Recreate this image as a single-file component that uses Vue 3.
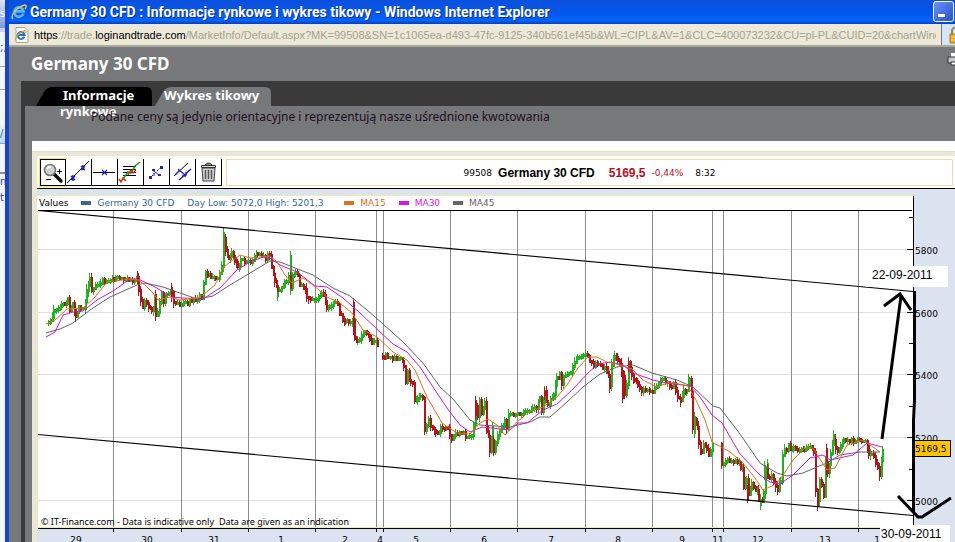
<script setup>
const url = {
  scheme: 'https',
  sub: '://trade.',
  host: 'loginandtrade.com',
  rest: '/MarketInfo/Default.aspx?MK=99508&SN=1c1065ea-d493-47fc-9125-340b561ef45b&WL=CIPL&AV=1&CLC=400073232&CU=pl-PL&CUID=20&chartWindow=1'
}

const verticals = [113, 181, 248, 315, 376, 383, 450, 517, 585, 652, 712, 723, 791, 858]
const levels = [
  { y: 249, label: '5800' },
  { y: 312, label: '5600' },
  { y: 374, label: '5400' },
  { y: 437, label: '5200' },
  { y: 500, label: '5000' }
]
const minorTicks = [217, 280, 343, 406, 469]
const days = [
  [76, '29'], [147, '30'], [214, '31'], [281, '1'], [345, '2'], [380, '4'], [416, '5'],
  [484, '6'], [551, '7'], [618, '8'], [682, '9'], [718, '11'], [758, '12'], [825, '13'], [877, '1']
]

// Price turning points, one array per uninterrupted session.
const sessions = [
  [46,321,50,320,53,308,58,307,61,303,66,303,67,298,69,308,72,303,75,314,78,307,83,307,86,292,89,278,91,288,95,284,102,280,108,279,117,277,123,277,130,279,134,280,137,277,138,288,142,308,144,300,148,307,151,310,154,300,155,315,159,303,161,291,163,299,168,292,171,290,173,302,181,303,187,301,193,298,201,295,203,280,205,273,208,272,212,277,217,277,221,263,223,235,225,249,228,257,231,251,234,258,237,267,240,259,250,260,254,255,259,252,265,257,269,253,271,268,274,280,277,291,281,287,286,280,288,273,290,288,292,272,295,272,299,282,303,285,308,298,316,297,323,293,326,307,331,303,337,302,342,322,345,317,348,322,352,317,354,337,357,340,361,332,366,331,371,340,374,339,377,345],
  [380,355,382,357,385,353,388,357,400,356,403,365,405,378,407,372,410,383,412,382,414,400,417,395,422,396,424,427,428,418,430,427,437,433,442,426,447,427,451,437,457,432,463,432,466,437,471,435,473,423,475,408,477,418,479,402,481,410,484,403,486,427,489,448,491,437,493,450,495,440,499,432,501,427,504,420,506,428,508,415,517,413,525,410,536,406,539,393,541,412,544,393,547,405,550,398,553,395,556,378,559,373,561,382,563,374,570,371,574,362,577,355,583,353,587,356,593,363,600,364,606,370,609,383,611,362,614,355,617,360,619,362,622,373,624,393,626,383,628,363,631,373,634,380,637,383,641,391,645,388,652,390,654,385,658,383,660,377,667,382,671,387,673,382,677,395,680,400,683,390,686,390,689,380,691,390,692,427,694,418,697,427,698,445,701,450,703,443,708,452,712,445],
  [720,443,721,462,727,459,737,461,742,467,743,487,746,480,748,495,751,485,755,487,760,502,763,492,765,467,767,478,771,474,777,488,780,477,782,452,788,445,795,448,810,447,813,452,815,487,817,498,819,477,823,492,825,460,827,473,830,450,833,437,837,452,840,442,843,437,853,439,865,439,868,450,873,457,877,465,879,473,882,448]
]

const spikes = [
  [89,275,286,1],[137,271,284,0],[155,290,321,0],[171,283,302,0],[223,228,246,1],[290,251,295,1],[277,283,301,1],
  [353,298,335,0],[424,400,434,0],[475,396,420,0],[484,398,408,1],[489,440,453,0],[492,422,453,1],[544,387,400,0],
  [609,372,393,0],[614,351,365,1],[622,370,403,0],[628,359,372,0],[680,395,407,0],[688,374,388,1],[694,412,438,1],
  [700,440,455,0],[721,443,469,0],[747,485,503,0],[760,495,510,1],[764,461,480,1],[767,459,478,1],[817,490,511,0],
  [826,444,475,0],[833,430,450,1],[879,463,478,0],[882,447,463,1]
]

let seed = 11
const rand = () => {
  seed = (seed * 1103515245 + 12345) % 2147483648
  return seed / 2147483648
}

let up = ''
let down = ''
for (const p of sessions) {
  let prev = p[1]
  for (let i = 2; i < p.length; i += 2) {
    const x0 = p[i - 2]
    const y0 = p[i - 1]
    const dx = p[i] - x0
    const dy = p[i + 1] - y0
    const n = Math.max(1, Math.round(dx / 2))
    for (let k = 1; k <= n; k++) {
      const x = Math.round(x0 + (dx * k) / n)
      const steep = Math.min(3, Math.abs(dy) / 4)
      const y = Math.round(y0 + (dy * k) / n + (rand() - 0.5) * (3 + steep))
      const top = Math.min(prev, y) - Math.round(rand() * (2 + steep))
      const low = Math.max(prev, y) + 2 + Math.round(rand() * (3 + steep))
      const seg = `M${x} ${Math.min(prev, y)}h2V${Math.max(prev, y) + 3}h-2zM${x} ${top}h1V${low}h-1z`
      if (y <= prev) up += seg
      else down += seg
      prev = y
    }
  }
}
for (const [x, a, b, g] of spikes) {
  const seg = `M${x} ${a}h1V${b}h-1zM${x} ${a + 4}h2V${b - 4}h-2z`
  if (g) up += seg
  else down += seg
}

const averages = [
  { color: '#5f6664', points: '46,333 60,329 73,323 90,310 110,297 137,285 145,283 163,287 180,293 197,299 213,296 230,285 250,273 270,261 280,262 290,266 313,275 333,288 350,296 367,310 383,324 403,342 423,363 440,387 453,399 470,420 480,425 510,427 530,422 540,417 550,417 567,402 583,387 600,374 617,367 633,365 652,373 677,380 693,387 713,406 720,408 740,434 760,463 777,473 787,476 803,473 817,467 827,463 840,455 860,452 880,452' },
  { color: '#d315d3', points: '46,337 55,332 63,315 73,312 83,311 97,300 113,291 130,279 138,279 155,287 172,297 183,298 203,299 220,288 237,270 250,262 263,257 270,258 280,265 297,272 315,286 327,287 343,298 360,313 380,332 393,344 407,352 420,367 433,387 447,408 460,425 470,432 482,427 510,430 518,423 527,423 543,410 557,404 573,389 588,373 598,364 610,362 623,365 633,373 653,380 667,383 690,386 700,397 712,415 722,423 740,454 760,475 770,482 780,484 793,475 810,458 823,455 830,460 853,455 867,443 882,447' },
  { color: '#e0701f', points: '46,324 55,320 67,309 83,308 95,297 107,282 130,279 138,280 145,285 153,293 158,300 170,297 180,300 197,298 203,295 215,285 223,268 230,262 240,255 250,258 260,257 270,256 277,262 285,275 292,283 303,278 313,285 327,297 340,303 352,313 363,330 377,337 393,352 407,360 415,370 427,397 442,423 457,433 470,434 480,423 488,419 497,425 505,435 517,422 530,411 543,407 557,397 567,385 578,368 588,357 597,357 607,362 620,365 632,369 643,380 657,387 670,382 688,386 697,402 705,420 712,442 730,452 743,463 755,478 763,490 772,486 780,480 793,460 805,448 813,448 827,470 835,468 847,445 863,440 880,452' }
]
</script>

<template>
  <div class="desktop">
    <div class="behind" aria-hidden="true">
      <div class="behind-title">s</div>
      <div class="behind-bar">;,</div>
      <div class="behind-row"></div>
      <div class="behind-row blue">/</div>
      <div class="behind-text">n<br>t</div>
    </div>

    <div class="window">
      <header class="titlebar">
        <svg class="ie" viewBox="0 0 16 16" width="16" height="16">
          <path d="M12.4 9.6A4.7 4.7 0 1 1 12.6 7.4H4.3" fill="none" stroke="#5fb4f4" stroke-width="2.6" />
          <path d="M2 15C-1 12 5 3 14 1c2 0 1 3 0 4" fill="none" stroke="#e9c54a" stroke-width="1.4" />
        </svg>
        <h1>Germany 30 CFD : Informacje rynkowe i wykres tikowy - Windows Internet Explorer</h1>
        <button class="minimize" type="button" aria-label="Minimize"><i></i></button>
      </header>

      <div class="address">
        <svg viewBox="0 0 16 16" width="16" height="16">
          <path d="M2 .5h9l3 3v12H2z" fill="#fff" stroke="#a8a68f" />
          <path d="M10.4 9.6A3.5 3.5 0 1 1 10.6 8H4.8" fill="none" stroke="#2475c8" stroke-width="2" />
          <path d="M2 13.5C0 11 5 5 11 3.6c2 0 1 2 .4 2.6" fill="none" stroke="#d9a928" stroke-width="1.1" />
        </svg>
        <p class="url"><b>{{ url.scheme }}</b>{{ url.sub }}<b>{{ url.host }}</b>{{ url.rest }}</p>
        <div class="lock">
          <svg viewBox="0 0 12 18" width="12" height="18">
            <path d="M3 9V5a3 3 0 0 1 7 0v4" fill="none" stroke="#94886a" stroke-width="2" />
            <path d="M1 8h11v9H1z" fill="#e9a91f" stroke="#a97a10" />
            <path d="M2 11h10M2 14h10" stroke="#ffd878" />
          </svg>
        </div>
      </div>

      <main class="page">
        <div class="page-head">
          <h2>Germany 30 CFD</h2>
          <svg viewBox="0 0 14 16" width="8" height="16" preserveAspectRatio="xMinYMid slice">
            <path d="M4 1h9v5H4z" fill="#fff" />
            <path d="M1 5h13v6H1z" fill="#c9c9c9" stroke="#333" />
            <path d="M4 10h9v3H4z" fill="#fff" stroke="#333" />
          </svg>
        </div>

        <section class="panel">
          <nav class="tabs">
            <a class="tab first" href="#info">
              <svg viewBox="0 0 116 19" width="116" height="19"><path d="M0 19 8 5Q11 0 17 0H110Q116 0 116 6V19z" fill="#000" /></svg>
              <span>Informacje rynkowe</span>
            </a>
            <a class="tab second" href="#chart">
              <svg viewBox="0 0 116 19" width="116" height="19"><path d="M0 19 8 5Q11 0 17 0H110Q116 0 116 6V19z" fill="#77787a" /></svg>
              <span>Wykres tikowy</span>
            </a>
          </nav>

          <div class="content">
            <p class="notice">Podane ceny są jedynie orientacyjne i reprezentują nasze uśrednione kwotowania</p>

            <div class="sheet">
              <div class="frame">
                <div class="toolbar">
                  <div class="tools">
                    <button class="tool active" type="button" aria-label="Zoom">
                      <svg viewBox="0 0 24 24" width="24" height="24">
                        <path d="m13 13 7 7" stroke="#111" stroke-width="3.5" stroke-linecap="round" />
                        <circle cx="9" cy="9" r="5.5" fill="#cdd2d2" stroke="#777" stroke-width="1.6" />
                        <path d="M6 8q1-3 4-2" fill="none" stroke="#fff" stroke-width="1.5" />
                        <path d="M16 10.500h5M18.500 8v5M5 18.500h5" stroke="#000" />
                      </svg>
                    </button>
                    <button class="tool" type="button" aria-label="Trend line">
                      <svg viewBox="0 0 24 24" width="24" height="24">
                        <path d="M1 23 23 1" stroke="#000" />
                        <path d="m5 16 4 4m-4 0 4-4m-2-1v6M15 6l4 4m-4 0 4-4m-2-1v5" stroke="#22b" stroke-width="1.5" />
                      </svg>
                    </button>
                    <button class="tool" type="button" aria-label="Horizontal line">
                      <svg viewBox="0 0 24 24" width="24" height="24">
                        <path d="M1 12.500h22" stroke="#000" />
                        <path d="m10 10 5 5m-5 0 5-5" stroke="#22b" stroke-width="1.300" />
                      </svg>
                    </button>
                    <button class="tool" type="button" aria-label="Fibonacci retracement">
                      <svg viewBox="0 0 24 24" width="24" height="24">
                        <path d="M5 6.500h13M5 9.500h13M5 12.500h13M5 15.500h13" stroke="#000" />
                        <path d="m1 19 2 3 2-4 3 3" fill="none" stroke="#d22" stroke-width="1.6" />
                        <path d="m5 19 5-7 3 1 4-7 5-4" fill="none" stroke="#1a9c1a" stroke-width="1.6" />
                        <path d="m10 15 3-5 2 3 3-3" fill="none" stroke="#c22" stroke-width="1.300" />
                      </svg>
                    </button>
                    <button class="tool" type="button" aria-label="Measure">
                      <svg viewBox="0 0 24 24" width="24" height="24">
                        <path d="m7 17 10-10M9 10l7 6m-6 0V9" stroke="#22b" stroke-dasharray="3 1" />
                        <path d="M5 16h3v3H5zM16 6h3v3h-3zM8 9h3v2H8zM14 14h3v2h-3z" fill="#22b" />
                      </svg>
                    </button>
                    <button class="tool" type="button" aria-label="Parallel lines">
                      <svg viewBox="0 0 24 24" width="24" height="24">
                        <path d="M4 16 18 3M9 20 21 9" stroke="#000" />
                        <path d="m5 15 5-5M9 20 21 9M8 9l8 7M16 16v-4M16 16h-4" fill="none" stroke="#22b" stroke-width="1.300" />
                      </svg>
                    </button>
                    <button class="tool" type="button" aria-label="Delete">
                      <svg viewBox="0 0 24 24" width="24" height="24">
                        <path d="M6 8h13l-1 13H7z" fill="#ccc" stroke="#444" />
                        <path d="M9.500 10v9M12.500 10v9M15.500 10v9" stroke="#555" stroke-width="1.400" />
                        <path d="M5.500 5.500h14v2h-14z" fill="#ddd" stroke="#333" />
                        <path d="M9 5q3.500-4 7 0" fill="#888" stroke="#333" />
                      </svg>
                    </button>
                  </div>
                  <div class="quote">
                    <span class="small">99508</span>
                    <strong>Germany 30 CFD</strong>
                    <strong class="price">5169,5</strong>
                    <span class="small loss">-0,44%</span>
                    <span class="small time">8:32</span>
                  </div>
                </div>

                <div class="legend-row">
                  <div class="legend">
                    <span class="values">Values</span>
                    <span class="key blue"><i></i>Germany 30 CFD</span>
                    <span class="range">Day Low: 5072,0 High: 5201,3</span>
                    <span class="key orange"><i></i>MA15</span>
                    <span class="key pink"><i></i>MA30</span>
                    <span class="key gray"><i></i>MA45</span>
                  </div>
                  <div class="axis-top"></div>
                </div>

                <svg class="chart" viewBox="37 210 918 350" role="img" aria-label="Germany 30 CFD">
                  <rect x="37" y="210" width="918" height="350" fill="#dae3ef" />
                  <rect x="37" y="210" width="876" height="318" fill="#fff" />
                  <g shape-rendering="crispEdges">
                    <path v-for="l in levels" :key="l.y" :d="`M38 ${l.y + 0.5}H912`" stroke="#e0e0e0" />
                    <path v-for="x in verticals" :key="x" :d="`M${x + 0.5} 211V531`" stroke="#8c8c8c" />
                    <path :d="up" fill="#1fb41f" />
                    <path :d="down" fill="#b5121b" />
                  </g>
                  <polyline v-for="a in averages" :key="a.color" :points="a.points" :stroke="a.color" fill="none" />
                  <path d="M38 210.500 913 291.500M38 434.500 913 515.500" stroke="#000" stroke-width="1.200" />
                  <g shape-rendering="crispEdges" stroke="#000">
                    <path d="M38 210.500H912M38 528.500H913M913.500 210V528" />
                    <path d="M37.500 210V528M38 527.500H912" stroke="#f0e8b4" />
                    <path v-for="l in levels" :key="l.y" :d="`M907 ${l.y + 0.5}h6`" />
                    <path v-for="y in minorTicks" :key="y" :d="`M909 ${y + 0.5}h4`" />
                    <path v-for="x in verticals" :key="x" :d="`M${x + 0.5} 528v4`" />
                  </g>
                  <g class="axis-text">
                    <text v-for="l in levels" :key="l.y" x="915" :y="l.y + 5">{{ l.label }}</text>
                    <text v-for="d in days" :key="d[0]" :x="d[0]" y="543" text-anchor="middle">{{ d[1] }}</text>
                    <rect x="913.500" y="440.500" width="37" height="16" fill="#ffc400" stroke="#000" />
                    <text x="915" y="452">5169,5</text>
                  </g>
                  <text class="credit" x="41" y="525">© IT-Finance.com - Data is indicative only</text>
                  <text class="credit" x="219" y="525">Data are given as an indication</text>
                  <path d="M866 266h82v21h-82zM880 525h70v20h-70z" fill="#fff" />
                  <text class="note" x="872" y="279">22-09-2011</text>
                  <text class="note" x="881" y="538">30-09-2011</text>
                  <g fill="none" stroke="#000" stroke-width="3">
                    <path d="M882 439 901 296M914.500 291V400L913.500 420V512M884 306 900 294 911 310" />
                    <path d="M898 496 918 517H922L951 498" />
                  </g>
                </svg>
              </div>
            </div>
          </div>
        </section>
      </main>
    </div>
  </div>
</template>

<style>
body {
  background: #77787a;
}
</style>

<style scoped>
h1, h2, p {
  margin: 0;
}
svg {
  display: block;
}
.desktop {
  display: flex;
  height: 100vh;
  overflow: hidden;
  font-family: "DejaVu Sans", sans-serif;
  white-space: nowrap;
}
.behind {
  flex: none;
  width: 5px;
  overflow: hidden;
  background: #f4f4fa;
  color: #35418c;
  font-size: 10px;
  line-height: 16px;
}
.behind-title {
  height: 28px;
  padding-top: 6px;
  box-sizing: border-box;
  background: linear-gradient(#dfe5f7, #7c99dd);
  color: #fff;
}
.behind-bar {
  height: 26px;
  padding-top: 8px;
  border-top: 4px solid #c9d2ea;
  border-bottom: 1px solid #9a9fb5;
}
.behind-row {
  height: 22px;
  border-bottom: 1px solid #9a9fb5;
}
.behind-row.blue {
  height: 54px;
  padding-top: 36px;
  box-sizing: border-box;
  background: linear-gradient(#f6f6fa 60%, #b9d5f5);
}
.behind-text {
  margin-top: 28px;
  border-top: 2px solid #8b8da0;
}
.window {
  flex: 1;
  min-width: 0;
  border-left: 4px solid #1145d8;
}
.titlebar {
  display: flex;
  align-items: center;
  height: 24px;
  padding: 0 1px 0 2px;
  background: linear-gradient(#0a4fdc, #0459ec 60%, #0365fb 85%, #0340c0);
}
.titlebar h1 {
  flex: 1;
  margin-left: 3px;
  color: #fff;
  font: bold 14px/22px Roboto, sans-serif;
  text-shadow: 1px 1px #0a2f8c;
}
.minimize {
  display: flex;
  align-items: flex-end;
  width: 21px;
  height: 21px;
  padding: 4px;
  margin-bottom: 2px;
  border: 1px solid #fff;
  border-radius: 3px;
  background: linear-gradient(135deg, #6b93f3, #2450cf);
}
.minimize i {
  width: 7px;
  height: 3px;
  background: #fff;
}
.address {
  display: flex;
  align-items: center;
  gap: 4px;
  height: 21px;
  padding-left: 5px;
  border-bottom: 2px solid #a9a99a;
  background: #ece9d8;
}
.url {
  flex: 1;
  min-width: 0;
  overflow: hidden;
  color: #a5a28f;
  font: 11px/20px "Liberation Sans", sans-serif;
}
.url b {
  color: #000;
  font-weight: normal;
}
.lock {
  width: 14px;
  height: 21px;
  padding: 2px 0 0 7px;
  margin-left: 1px;
  box-sizing: border-box;
  overflow: hidden;
  border-left: 1px solid #777;
  background: #d6e4fa;
}
.page {
  background: #77787a;
}
.page-head {
  display: flex;
  align-items: center;
  justify-content: space-between;
  height: 34px;
  padding-left: 22px;
}
.page-head h2 {
  color: #fff;
  font: bold 17px/32px "Noto Sans", sans-serif;
}
.page-head svg {
  margin-bottom: 8px;
}
.panel {
  margin-left: 12px;
  border-left: 4px solid #3a3a3a;
}
.tabs {
  display: flex;
  gap: 3px;
  height: 25px;
  padding: 6px 0 0 11px;
  box-sizing: border-box;
  background: #3a3a3a;
}
.tab {
  display: grid;
  width: 116px;
  height: 19px;
  color: #fff;
  font: bold 13px/16px "Noto Sans", sans-serif;
  text-decoration: none;
}
.tab svg,
.tab span {
  grid-area: 1 / 1;
}
.tab span {
  padding-left: 9px;
}
.first span {
  padding: 0 14px 0 24px;
  text-indent: 3px;
  white-space: normal;
}
.content {
  padding-left: 7px;
}
.notice {
  height: 35px;
  padding-left: 59px;
  box-sizing: border-box;
  color: #1c0f22;
  font: 12px/22px "Noto Sans", sans-serif;
}
.sheet {
  padding-top: 10px;
  background: #fff;
}
.frame {
  padding-left: 4px;
  border-top: 1px solid #e6e0b8;
  border-left: 1px solid #f0eacb;
  background: #e9e7dc;
}
.toolbar {
  display: flex;
  gap: 4px;
  padding: 7px 2px 2px 3px;
  border-bottom: 1px solid #000;
  background: linear-gradient(#e9e7dc 4px, #fffdf4 4px);
}
.tools {
  display: flex;
}
.tool {
  width: 26px;
  height: 27px;
  padding: 0;
  border: 1px solid #000;
  border-width: 0 1px 1px 0;
  background: #fff;
}
.tool.active {
  border: 1px solid #000;
  outline: 1px solid #f0e850;
}
.quote {
  display: flex;
  flex: 1;
  align-items: center;
  justify-content: center;
  gap: 6px;
  border: 1px solid #e6deae;
  background: #fff;
  font: 9px/22px "DejaVu Sans", sans-serif;
}
.quote strong {
  font: bold 12px/22px "Liberation Sans", sans-serif;
}
.quote .price {
  margin-left: 8px;
}
.price,
.loss {
  color: #b50f1c;
}
.time {
  margin-left: 6px;
}
.legend-row {
  display: flex;
  height: 15px;
  border-top: 6px solid #dae3ef;
  background: #dae3ef;
}
.legend {
  display: flex;
  flex: 1;
  align-items: center;
  gap: 13px;
  padding-left: 2px;
  border-top: 1px solid #f2ecb0;
  background: #fff;
  font-size: 9px;
  line-height: 18px;
}
.key {
  display: flex;
  align-items: center;
  gap: 6px;
}
.key i {
  width: 10px;
  height: 4px;
  background: currentColor;
}
.range {
  min-width: 144px;
}
.blue,
.range {
  color: #3a6599;
}
.orange {
  color: #e0701f;
}
.pink {
  color: #dd14dd;
}
.gray {
  color: #666;
}
.axis-top {
  width: 41px;
  margin-top: 1px;
  border-left: 1px solid #000;
}
.chart {
  width: 100%;
}
.axis-text {
  font: 9px "DejaVu Sans", sans-serif;
}
.credit {
  font: 9px "Noto Sans", sans-serif;
}
.note {
  font: 12px "Liberation Sans", sans-serif;
}
</style>
